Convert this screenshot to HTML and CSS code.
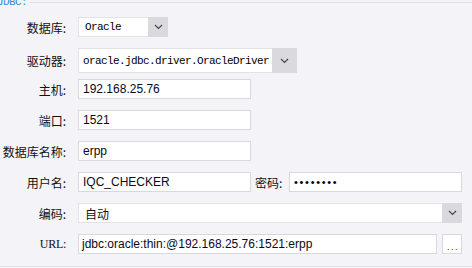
FILE: index.html
```html
<!DOCTYPE html>
<html lang="zh-CN">
<head>
<meta charset="UTF-8">
<title>JDBC</title>
<link rel="stylesheet" href="styles.css">
</head>
<body>
<div class="group">
    <span class="legend">JDBC:</span>

    <div class="row">
        <label class="lbl">数据库:</label>
        <div class="combo combo-db">
            <span class="combo-text mono db">Oracle</span>
            <span class="combo-btn"><svg width="9" height="6" viewBox="0 0 9 6"><path d="M1 1 L4.5 4.5 L8 1" fill="none" stroke="#444" stroke-width="1.1"/></svg></span>
        </div>
    </div>

    <div class="row row-tall">
        <label class="lbl">驱动器:</label>
        <div class="combo combo-driver">
            <span class="combo-text mono">oracle.jdbc.driver.OracleDriver</span>
            <span class="combo-btn wide"><svg width="9" height="6" viewBox="0 0 9 6"><path d="M1 1 L4.5 4.5 L8 1" fill="none" stroke="#444" stroke-width="1.1"/></svg></span>
        </div>
    </div>

    <div class="row row-close">
        <label class="lbl">主机:</label>
        <div class="field short">192.168.25.76</div>
    </div>

    <div class="row">
        <label class="lbl">端口:</label>
        <div class="field short">1521</div>
    </div>

    <div class="row">
        <label class="lbl">数据库名称:</label>
        <div class="field short">erpp</div>
    </div>

    <div class="row">
        <label class="lbl">用户名:</label>
        <div class="field short">IQC_CHECKER</div>
        <label class="lbl-pwd">密码:</label>
        <div class="field short pwd">••••••••</div>
    </div>

    <div class="row">
        <label class="lbl">编码:</label>
        <div class="combo combo-enc">
            <span class="combo-text enc">自动</span>
            <span class="combo-btn"><svg width="9" height="6" viewBox="0 0 9 6"><path d="M1 1 L4.5 4.5 L8 1" fill="none" stroke="#444" stroke-width="1.1"/></svg></span>
        </div>
    </div>

    <div class="row">
        <label class="lbl serif">URL:</label>
        <div class="field url">jdbc:oracle:thin:@192.168.25.76:1521:erpp</div>
        <div class="dots-btn">. . .</div>
    </div>
</div>
</body>
</html>
```

FILE: styles.css
```css
body {
    margin: 0;
    padding: 0;
    background-color: #f4f3f8;
    font-family: "Liberation Sans", Arial, sans-serif;
    font-size: 12px;
    color: #111;
    overflow: hidden;
}

.group {
    position: relative;
    margin-top: 2px;
    border-top: 1px solid #e2e1e8;
    border-bottom: 1px solid #e2e1e8;
    padding: 3px 0 12px 0;
}

.legend {
    position: absolute;
    left: -3px;
    top: -7px;
    padding-right: 3px;
    background-color: #f4f3f8;
    color: #2a8fd6;
    font-family: "Liberation Mono", monospace;
    font-size: 11px;
    letter-spacing: -0.6px;
    line-height: 12px;
}

.row {
    display: flex;
    align-items: center;
    height: 20px;
    margin-top: 11px;
}

.row-tall {
    height: 25px;
}

.row-close {
    margin-top: 6px;
}

.lbl {
    width: 66px;
    margin-right: 12px;
    text-align: right;
    font-family: "Noto Sans CJK SC", sans-serif;
    font-size: 12px;
    color: #111;
    white-space: nowrap;
}

.lbl.serif {
    font-family: "Liberation Serif", serif;
    font-size: 12px;
    letter-spacing: -0.3px;
}

.lbl-pwd {
    margin-left: 4px;
    width: 28px;
    margin-right: 6px;
    font-family: "Noto Sans CJK SC", sans-serif;
    font-size: 12px;
    white-space: nowrap;
}

.field {
    box-sizing: border-box;
    height: 20px;
    line-height: 18px;
    background-color: #fff;
    border: 1px solid #d9d9dd;
    padding-left: 4px;
    color: #0a0a1a;
    white-space: nowrap;
    overflow: hidden;
}

.field.short {
    width: 173px;
}

.field.pwd {
    letter-spacing: 1.7px;
    font-size: 11px;
    color: #000;
}

.field.url {
    width: 359px;
    padding-left: 3px;
}

.combo {
    box-sizing: border-box;
    display: flex;
    height: 100%;
    background-color: #fff;
    border: 1px solid #e3e3e7;
    border-right: none;
}

.combo-db {
    width: 90px;
}

.combo-driver {
    width: 219px;
}

.combo-enc {
    width: 384px;
}

.combo-text {
    flex: 1;
    display: flex;
    align-items: center;
    padding-left: 4px;
    white-space: nowrap;
    overflow: hidden;
}

.combo-text.db {
    padding-left: 6px;
}

.combo-text.enc {
    padding-left: 6px;
    font-family: "Noto Sans CJK SC", sans-serif;
    font-size: 12px;
}

.mono {
    font-family: "Liberation Mono", monospace;
    font-size: 11px;
    letter-spacing: -0.6px;
    color: #000;
}

.combo-btn {
    width: 20px;
    display: flex;
    align-items: center;
    justify-content: center;
    background-color: #dadade;
    margin-top: -1px;
    margin-bottom: -1px;
}

.combo-btn.wide {
    width: 25px;
}

.dots-btn {
    box-sizing: border-box;
    width: 20px;
    height: 20px;
    margin-left: 5px;
    background-color: #fff;
    border: 1px solid #d9d9dd;
    font-size: 9px;
    line-height: 24px;
    text-align: center;
    letter-spacing: -0.5px;
    color: #222;
}
```
